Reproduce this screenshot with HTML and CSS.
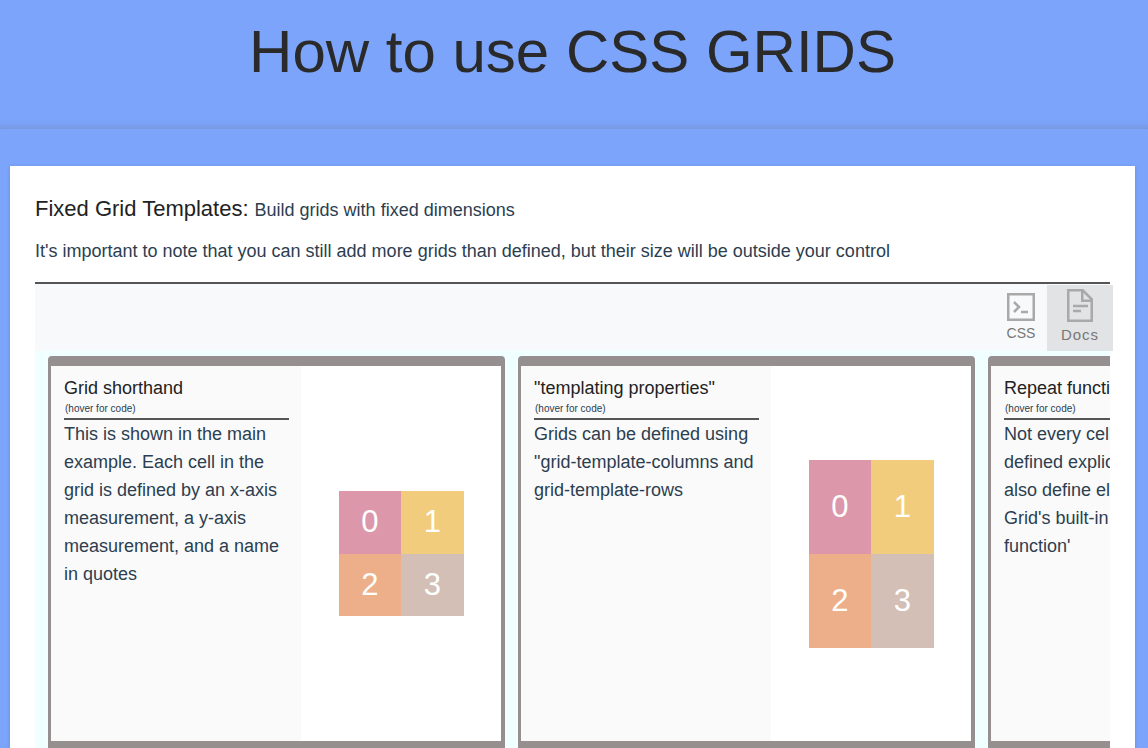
FILE: index.html
```html
<!DOCTYPE html>
<html lang="en">
<head>
<meta charset="utf-8">
<title>How to use CSS GRIDS</title>
<link rel="stylesheet" href="styles.css">
</head>
<body>
<header class="banner">
  <h1 class="banner-title">How to use CSS GRIDS</h1>
</header>
<main class="panel">
  <div class="intro">
    <h2 class="intro-title">Fixed Grid Templates:</h2>
    <span class="intro-text">Build grids with fixed dimensions</span>
  </div>
  <p class="intro-note">It's important to note that you can still add more grids than defined, but their size will be outside your control</p>
  <nav class="toolbar">
    <button class="tool" type="button">
      <svg class="tool-icon" width="28" height="28" viewBox="0 0 28 28" fill="none" stroke="#a9a9a9" stroke-width="2.5" aria-hidden="true">
        <rect x="1.25" y="1.25" width="25.5" height="25.5"/>
        <path d="M7 9l5 5-5 5M14 19h7"/>
      </svg>
      CSS
    </button>
    <button class="tool tool-active" type="button">
      <svg class="tool-icon" width="28" height="34" viewBox="0 0 28 34" fill="none" stroke="#a9a9a9" stroke-width="2.5" aria-hidden="true">
        <path d="M2.25 1.25h14.5l9 9v21.5H2.25zM16.25 1v10.75H26M7 17h15M7 22h8"/>
      </svg>
      Docs
    </button>
  </nav>
  <section class="examples">
    <article class="example">
      <div class="example-info">
        <h3 class="example-title">Grid shorthand</h3>
        <p class="example-hint">(hover for code)</p>
        <p class="example-text">This is shown in the main example. Each cell in the grid is defined by an x-axis measurement, a y-axis measurement, and a name in quotes</p>
      </div>
      <div class="example-demo">
        <div class="demo">
          <div class="cell cell-pink">0</div>
          <div class="cell cell-yellow">1</div>
          <div class="cell cell-orange">2</div>
          <div class="cell cell-taupe">3</div>
        </div>
      </div>
    </article>
    <article class="example">
      <div class="example-info">
        <h3 class="example-title">"templating properties"</h3>
        <p class="example-hint">(hover for code)</p>
        <p class="example-text">Grids can be defined using "grid-template-columns and grid-template-rows</p>
      </div>
      <div class="example-demo">
        <div class="demo demo-tall">
          <div class="cell cell-pink">0</div>
          <div class="cell cell-yellow">1</div>
          <div class="cell cell-orange">2</div>
          <div class="cell cell-taupe">3</div>
        </div>
      </div>
    </article>
    <article class="example">
      <div class="example-info">
        <h3 class="example-title">Repeat function</h3>
        <p class="example-hint">(hover for code)</p>
        <p class="example-text">Not every cell must be defined explicitly. You can also define elements with Grid's built-in 'repeat function'</p>
      </div>
      <div class="example-demo"></div>
    </article>
  </section>
</main>
</body>
</html>
```
FILE: styles.css
```css
* {
  box-sizing: border-box;
}

body {
  margin: 0;
  background: #7ba4fa;
  color: #2c3e50;
  font-family: "Liberation Sans", Arial, sans-serif;
  font-size: 18px;
  line-height: 28px;
}

h1, h2, h3, p {
  margin: 0;
  font-weight: 400;
}

.banner {
  padding: 16px 27px 41px 24px;
  box-shadow: inset 0 -9px 9px -9px rgba(110, 110, 110, 0.4);
  text-align: center;
}

.banner-title {
  color: #2a2a2a;
  font-size: 60px;
  line-height: 72px;
}

.panel {
  margin: 37px 13px 0 10px;
  padding: 28px 25px 25px;
  background: #fff;
  box-shadow: 0 1px 4px rgba(0, 0, 0, 0.15);
}

.intro {
  display: flex;
  align-items: baseline;
  gap: 6px;
}

.intro-title {
  color: #222;
  font-size: 22px;
  line-height: 30px;
}

.intro-note {
  margin-top: 13px;
  padding-bottom: 17px;
  border-bottom: 2px solid #555;
}

.toolbar {
  display: flex;
  justify-content: flex-end;
  align-items: flex-start;
  margin-right: -3px;
  padding-top: 1px;
  background: linear-gradient(#f8f9fb, #f8f9fb) no-repeat 0 0 / calc(100% - 3px) 100%;
}

.tool {
  display: flex;
  flex-direction: column;
  align-items: center;
  gap: 3px;
  width: 52px;
  height: 66px;
  padding: 8px 0 0;
  border: 0;
  background: none;
  color: #777;
  font: 14px/18px "Liberation Sans", Arial, sans-serif;
}

.tool-active {
  width: 66px;
  padding-top: 4px;
  background: #e2e3e5;
  font-size: 15px;
  letter-spacing: 1px;
}

.tool-icon {
  flex: none;
}

.examples {
  display: flex;
  gap: 13px;
  padding: 5px 13px 13px;
  overflow: hidden;
  background: #f0ffff;
}

.example {
  display: flex;
  flex: none;
  border: solid #958f8f;
  border-width: 10px 4px 10px 3px;
  border-radius: 4px;
  background: #fff;
}

.example-info {
  width: 250px;
  min-height: 375px;
  padding: 10px 12px 10px 13px;
  background: #fafafa;
}

.example-title {
  color: #222;
  font-size: 18px;
  line-height: 24px;
}

.example-hint {
  padding: 2px 1px;
  border-bottom: 2px solid #555;
  font-size: 10px;
  line-height: 14px;
}

.example-demo {
  display: grid;
  place-items: center;
  width: 200px;
}

.demo {
  display: grid;
  grid-template-columns: 1fr 1fr;
  grid-template-rows: 1fr 1fr;
  width: 125px;
  height: 125px;
}

.demo-tall {
  height: 188px;
}

.cell {
  display: grid;
  place-items: center;
  color: #fff;
  font-size: 31px;
}

.cell-pink {
  background: #dc98aa;
}

.cell-yellow {
  background: #f2cc7d;
}

.cell-orange {
  background: #ecaf89;
}

.cell-taupe {
  background: #d3bfb6;
}
```
